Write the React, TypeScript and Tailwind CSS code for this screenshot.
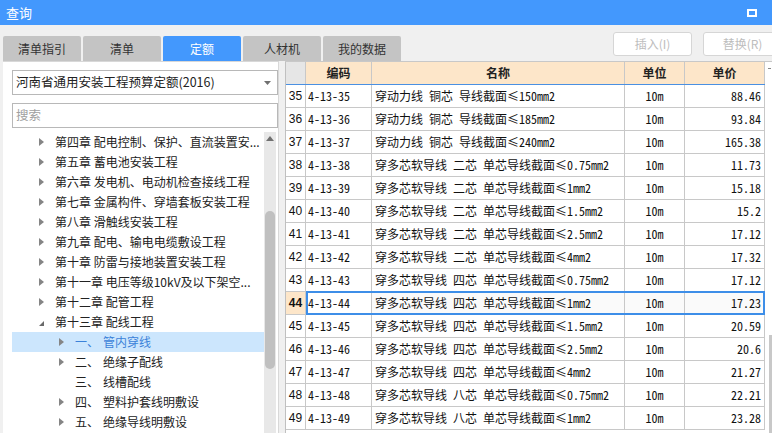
const chapters = [
    '第四章 配电控制、保护、直流装置安...',
    '第五章 蓄电池安装工程',
    '第六章 发电机、电动机检查接线工程',
    '第七章 金属构件、穿墙套板安装工程',
    '第八章 滑触线安装工程',
    '第九章 配电、输电电缆敷设工程',
    '第十章 防雷与接地装置安装工程',
    '第十一章 电压等级10kV及以下架空...',
    '第十二章 配管工程',
]

const sections = [
    { no: '一、', name: '管内穿线', arrow: true, active: true },
    { no: '二、', name: '绝缘子配线', arrow: true },
    { no: '三、', name: '线槽配线', arrow: false },
    { no: '四、', name: '塑料护套线明敷设', arrow: true },
    { no: '五、', name: '绝缘导线明敷设', arrow: true },
]

const rows = [
    ['35', '4-13-35', '穿动力线 铜芯 导线截面≤150mm2', '88.46'],
    ['36', '4-13-36', '穿动力线 铜芯 导线截面≤185mm2', '93.84'],
    ['37', '4-13-37', '穿动力线 铜芯 导线截面≤240mm2', '165.38'],
    ['38', '4-13-38', '穿多芯软导线 二芯 单芯导线截面≤0.75mm2', '11.73'],
    ['39', '4-13-39', '穿多芯软导线 二芯 单芯导线截面≤1mm2', '15.18'],
    ['40', '4-13-40', '穿多芯软导线 二芯 单芯导线截面≤1.5mm2', '15.2'],
    ['41', '4-13-41', '穿多芯软导线 二芯 单芯导线截面≤2.5mm2', '17.12'],
    ['42', '4-13-42', '穿多芯软导线 二芯 单芯导线截面≤4mm2', '17.32'],
    ['43', '4-13-43', '穿多芯软导线 四芯 单芯导线截面≤0.75mm2', '17.12'],
    ['44', '4-13-44', '穿多芯软导线 四芯 单芯导线截面≤1mm2', '17.23'],
    ['45', '4-13-45', '穿多芯软导线 四芯 单芯导线截面≤1.5mm2', '20.59'],
    ['46', '4-13-46', '穿多芯软导线 四芯 单芯导线截面≤2.5mm2', '20.6'],
    ['47', '4-13-47', '穿多芯软导线 四芯 单芯导线截面≤4mm2', '21.27'],
    ['48', '4-13-48', '穿多芯软导线 八芯 单芯导线截面≤0.75mm2', '22.21'],
    ['49', '4-13-49', '穿多芯软导线 八芯 单芯导线截面≤1mm2', '23.28'],
]

const tabs = ['清单指引', '清单', '定额', '人材机', '我的数据']

const Arrow = () => (
    <svg width="5" height="8" viewBox="0 0 5 8" className="shrink-0">
        <polygon points="0,0 5,4 0,8" fill="#858585" />
    </svg>
)

const App = () => {
    return (
        <div className="w-[772px] h-[433px] overflow-hidden bg-[#f0f0f0] flex flex-col font-['Noto_Sans_CJK_SC','Noto_Sans',sans-serif]">
            {/* title bar */}
            <div className="h-[25px] shrink-0 bg-[#4398fd] flex items-center justify-between pl-[6px] pr-[15px]">
                <span className="text-white text-[13px] leading-none">查询</span>
                <div className="w-[10px] h-[8px] border-2 border-white" />
            </div>

            {/* tabs + buttons */}
            <div className="h-[36px] shrink-0 flex pl-[3px]">
                <div className="flex items-end gap-[2px]">
                    {tabs.map((t) => (
                        <div
                            key={t}
                            className={`w-[78px] h-[25px] rounded-t-[2px] flex items-center justify-center text-[12px] ${t === '定额' ? 'bg-[#4398fd] text-white' : 'bg-[#c4c4c4] text-[#333]'}`}
                        >
                            {t}
                        </div>
                    ))}
                </div>
                <div className="flex-1" />
                <div className="flex gap-[11px] pt-[7px] mr-[-10px] shrink-0">
                    <div className="w-[79px] h-[24px] bg-white border border-[#d6d6d6] rounded-[3px] flex items-center justify-center text-[12px] text-[#bdbdbd]">插入(I)</div>
                    <div className="w-[79px] h-[24px] bg-white border border-[#d6d6d6] rounded-[3px] flex items-center justify-center text-[12px] text-[#bdbdbd]">替换(R)</div>
                </div>
            </div>

            {/* body */}
            <div className="flex-1 min-h-0 flex">
                {/* left panel */}
                <div className="ml-[3px] w-[276px] bg-white border-t border-r border-[#d8d8d8] flex flex-col">
                    <div className="pl-[9px] pr-0 pt-[8px] flex flex-col gap-[8px]">
                        <div className="h-[25px] border border-[#b8b8b8] flex items-center justify-between pl-[3px] pr-[6px]">
                            <span className="text-[12.5px] text-[#222]">河南省通用安装工程预算定额(2016)</span>
                            <svg width="7" height="4" viewBox="0 0 7 4">
                                <polygon points="0,0 7,0 3.5,4" fill="#707070" />
                            </svg>
                        </div>
                        <div className="h-[25px] border border-[#b8b8b8] flex items-center pl-[3px]">
                            <span className="text-[12.5px] text-[#a0a0a0]">搜索</span>
                        </div>
                    </div>

                    <div className="flex-1 min-h-0 flex pl-[9px] pt-[4px] pr-[2px]">
                        <div className="flex-1 min-w-0 flex flex-col text-[12px] text-[#222]">
                            {chapters.map((c) => (
                                <div key={c} className="h-[20px] shrink-0 flex items-center pl-[27px]">
                                    <Arrow />
                                    <span className="ml-[11px] whitespace-nowrap">{c}</span>
                                </div>
                            ))}
                            <div className="h-[20px] shrink-0 flex items-center pl-[27px]">
                                <svg width="5" height="5" viewBox="0 0 5 5" className="shrink-0 mt-[3px]">
                                    <polygon points="5,0 5,5 0,5" fill="#6a6a6a" />
                                </svg>
                                <span className="ml-[11px]">第十三章 配线工程</span>
                            </div>
                            {sections.map((s) => (
                                <div
                                    key={s.no}
                                    className={`h-[20px] shrink-0 flex items-center pl-[47px] ${s.active ? 'bg-[#cce6fd] text-[#3b82d9]' : ''}`}
                                >
                                    <span className="w-[5px] shrink-0 flex">{s.arrow && <Arrow />}</span>
                                    <span className="ml-[11px] w-[28px] shrink-0">{s.no}</span>
                                    <span>{s.name}</span>
                                </div>
                            ))}
                        </div>
                        {/* tree scrollbar */}
                        <div className="w-[12px] shrink-0 bg-[#e8e8e8] flex flex-col items-center pt-[4px]">
                            <svg width="8" height="5" viewBox="0 0 8 5">
                                <polygon points="4,0 8,5 0,5" fill="#707070" />
                            </svg>
                            <div className="mt-[70px] w-[10px] h-[158px] rounded-full bg-[#c0c0c0]" />
                        </div>
                    </div>
                </div>

                {/* table */}
                <div className="ml-[6px] flex-1 flex border-t border-[#c8c8c8] bg-white font-['Noto_Sans_Mono_CJK_SC','Noto_Sans_CJK_SC',monospace] text-[12px] text-[#111]">
                    <div className="flex flex-col border-l border-[#c0c0c0]">
                        <div className="grid grid-cols-[20px_66px_253px_60px_80px] h-[23px] shrink-0 border-b border-[#4a90e2] font-['Noto_Sans_CJK_SC',sans-serif] font-bold text-[12px] text-[#222]">
                            <div className="bg-[#e6e6e6] border-r border-[#c8c8c8]" />
                            <div className="bg-[#fde6c9] border-r border-[#c8c8c8] flex items-center justify-center">编码</div>
                            <div className="bg-[#fde6c9] border-r border-[#c8c8c8] flex items-center justify-center">名称</div>
                            <div className="bg-[#fde6c9] border-r border-[#c8c8c8] flex items-center justify-center">单位</div>
                            <div className="bg-[#fde6c9] border-r border-[#c8c8c8] flex items-center justify-center">单价</div>
                        </div>
                        {rows.map(([n, code, name, price]) => {
                            const sel = n === '44'
                            return (
                                <div key={n} className={`relative grid grid-cols-[20px_66px_253px_60px_80px] h-[23px] shrink-0 ${sel ? 'bg-[#fafafa]' : ''}`}>
                                    <div className={`border-r border-b border-[#c8c8c8] flex items-center justify-center font-['Liberation_Sans',sans-serif] text-[12px] ${sel ? 'bg-[#fde6c9] font-bold' : 'bg-white'}`}>{n}</div>
                                    <div className="border-r border-b border-[#c8c8c8] flex items-center pl-[2px] bg-white">{code}</div>
                                    <div className="border-r border-b border-[#c8c8c8] flex items-center pl-[3px] whitespace-nowrap overflow-hidden">{name}</div>
                                    <div className="border-r border-b border-[#c8c8c8] flex items-center justify-center">10m</div>
                                    <div className="border-r border-b border-[#c8c8c8] flex items-center justify-end pr-[3px]">{price}</div>
                                    {sel && <div className="absolute left-[20px] right-0 top-[-1px] bottom-0 border-2 border-[#3d8ee8]" />}
                                </div>
                            )
                        })}
                    </div>
                    {/* table scrollbar */}
                    <div className="flex-1 flex flex-col items-end">
                        <div className="mt-[6px] mr-[1px] w-[3px] h-[1px] bg-[#888]" />
                        <div className="mt-[266px] w-[3px] flex-1 bg-[#c8c8c8]" />
                    </div>
                </div>
            </div>
        </div>
    )
}

export default App
